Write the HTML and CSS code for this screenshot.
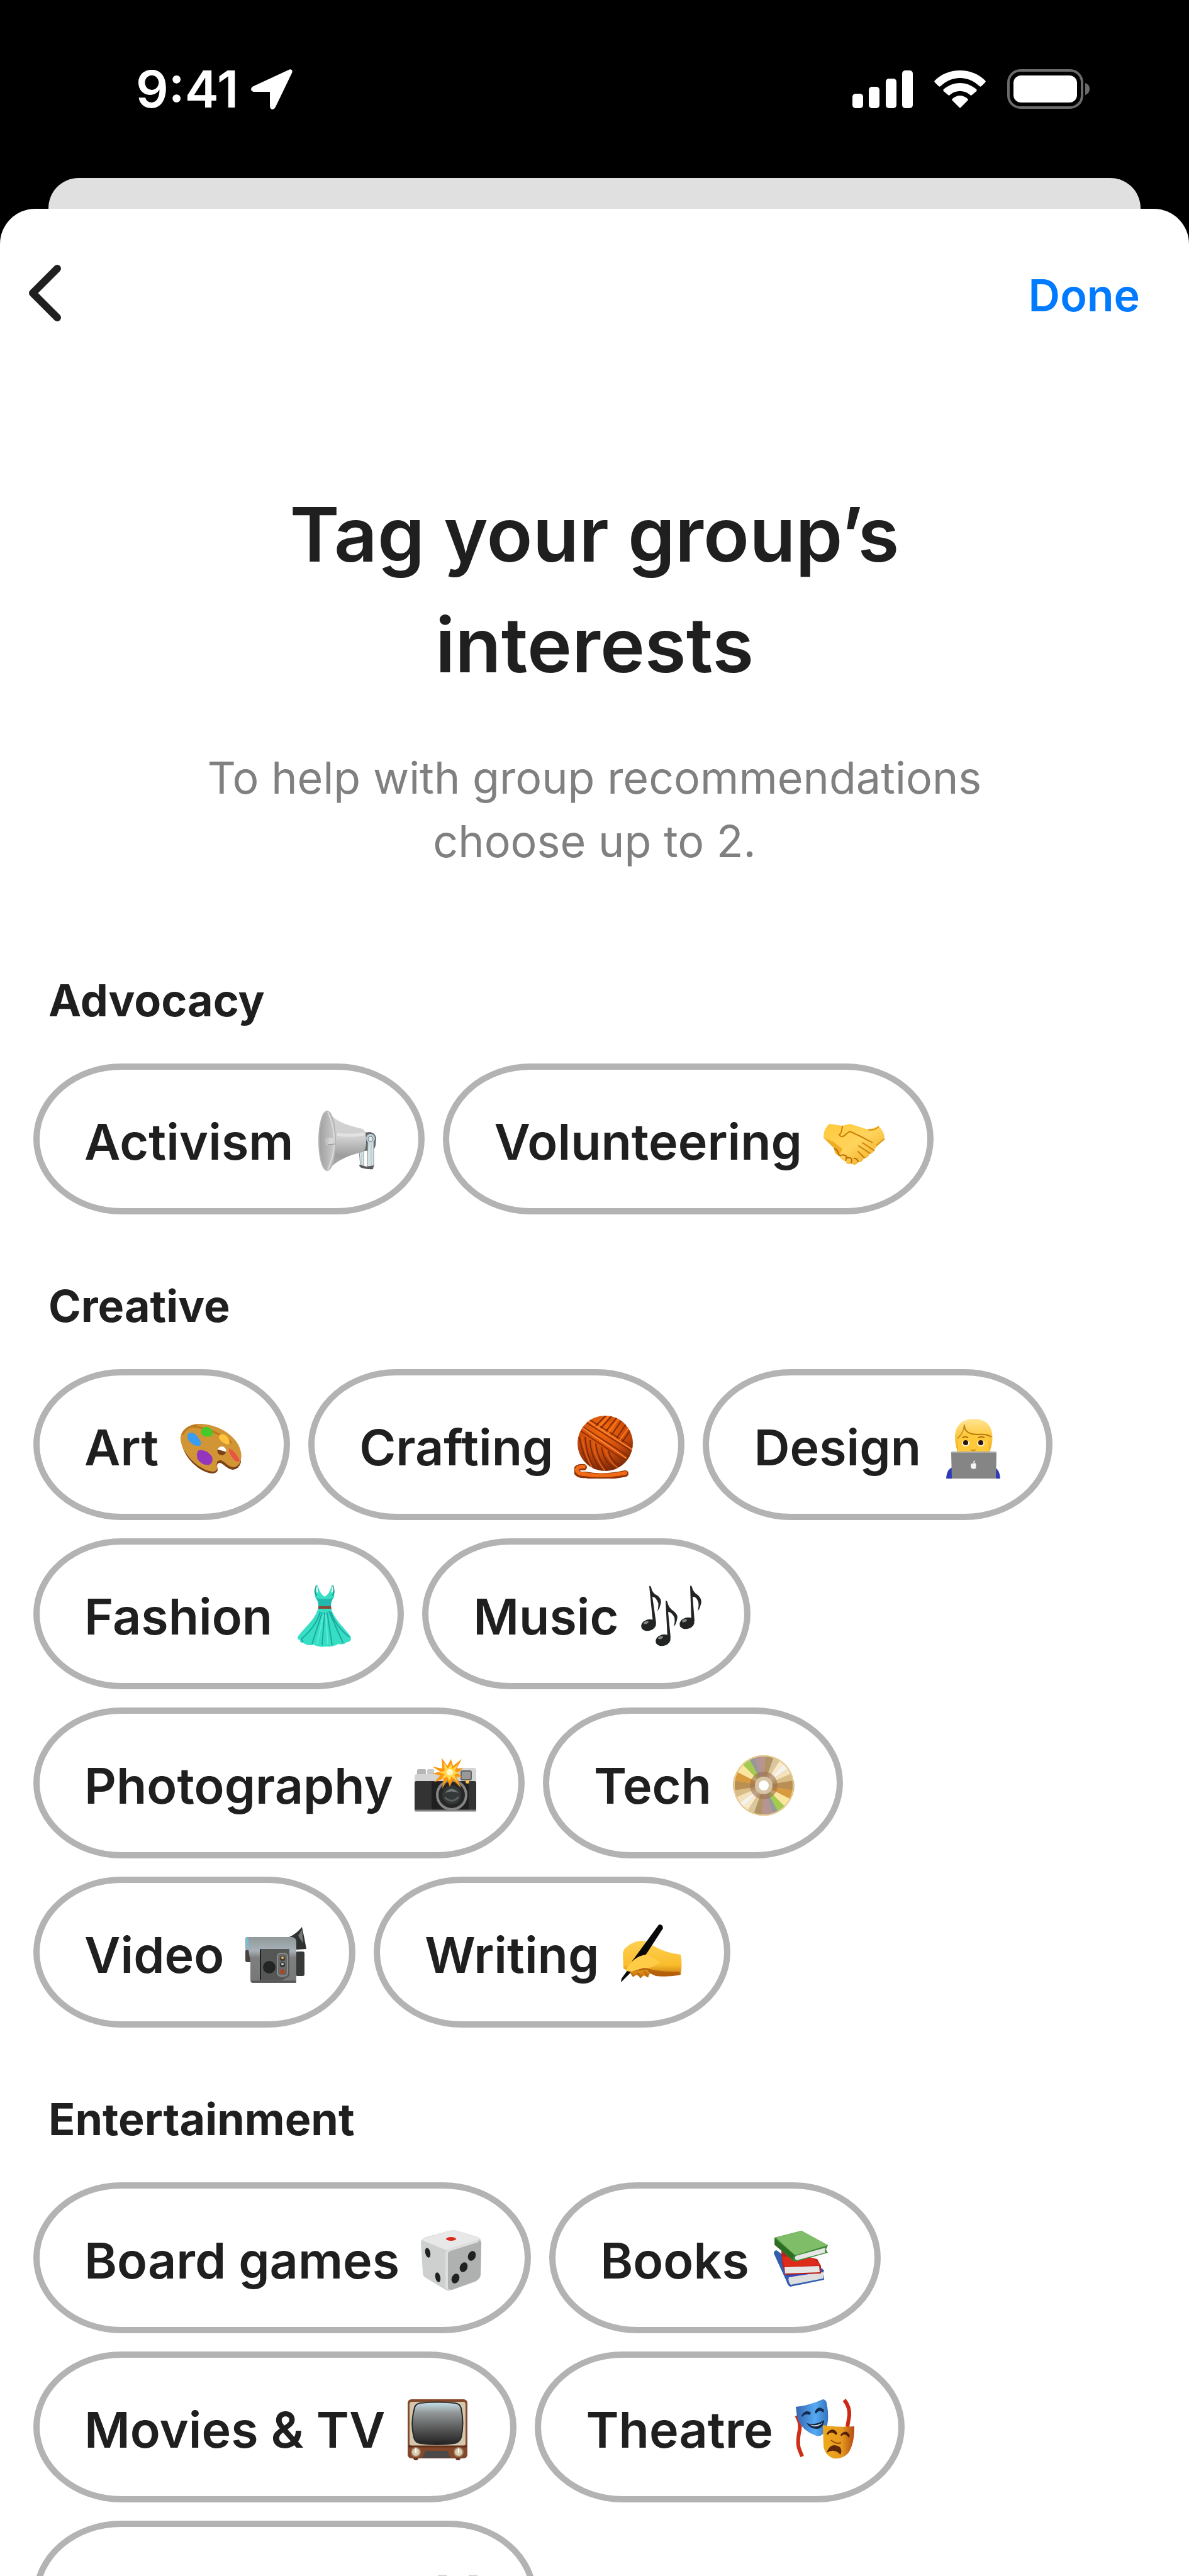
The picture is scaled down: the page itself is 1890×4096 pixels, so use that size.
FILE: index.html
```html
<!DOCTYPE html>
<html lang="en">
<head>
    <meta charset="UTF-8">
    <meta name="viewport" content="width=device-width, initial-scale=1.0">
    <title>Tag your group's interests</title>
    <link rel="stylesheet" href="styles.css">
</head>
<body>
    <div class="screen">
        <div class="status-bar">
            <div class="status-left">
                <span class="time">9:41</span>
                <svg class="location" viewBox="0 0 66 64" aria-hidden="true">
                    <path d="M60 1 L4 27 C-2 30 -1 36 6 36 L28 36 C30 36 30 36 30 38 L30 58 C30 65 36 66 39 60 L65 6 C67 2 64 -1 60 1 Z" fill="#fff"/>
                </svg>
            </div>
            <div class="status-right">
                <svg class="signal" viewBox="0 0 96 60" aria-hidden="true">
                    <g fill="#fff">
                        <rect x="0" y="37" width="17" height="23" rx="5"/>
                        <rect x="26" y="26" width="17" height="34" rx="5"/>
                        <rect x="53" y="13" width="17" height="47" rx="5"/>
                        <rect x="79" y="0" width="17" height="60" rx="5"/>
                    </g>
                </svg>
                <svg class="wifi" viewBox="0 0 82 60" aria-hidden="true">
                    <g fill="#fff">
                        <path d="M41 0 C57 0 71 6 81 16 C82 17 82 18 81 19 L75 25 C74 26 73 26 72 25 C63 17 53 12 41 12 C29 12 19 17 10 25 C9 26 8 26 7 25 L1 19 C0 18 0 17 1 16 C11 6 25 0 41 0 Z"/>
                        <path d="M41 20 C51 20 60 24 67 30 C68 31 68 32 67 33 L60 39 C59 40 58 40 57 39 C53 35 47 33 41 33 C35 33 29 35 25 39 C24 40 23 40 22 39 L15 33 C14 32 14 31 15 30 C22 24 31 20 41 20 Z"/>
                        <path d="M41 40 C45 40 50 42 53 45 C54 46 54 47 53 48 L42 59 C41 60 41 60 40 59 L29 48 C28 47 28 46 29 45 C32 42 37 40 41 40 Z"/>
                    </g>
                </svg>
                <svg class="battery" viewBox="0 0 131 63" aria-hidden="true">
                    <rect x="2" y="2" width="117" height="59" rx="19" fill="none" stroke="#6b6b6b" stroke-width="4"/>
                    <rect x="10" y="10" width="101" height="43" rx="12" fill="#fff"/>
                    <path d="M124 22 C129 24 131 27 131 31 C131 36 129 39 124 41 Z" fill="#6b6b6b"/>
                </svg>
            </div>
        </div>

        <div class="sheet-behind"></div>

        <main class="sheet">
            <nav class="nav">
                <button class="back" type="button" aria-label="Back">
                    <svg class="chevron" viewBox="0 0 54 92" aria-hidden="true">
                        <path d="M47 7 L8 46 L47 85" fill="none" stroke="#1f1f1f" stroke-width="12" stroke-linecap="round" stroke-linejoin="round"/>
                    </svg>
                </button>
                <button class="done" type="button">Done</button>
            </nav>

            <header class="intro">
                <h1>Tag your group’s<br>interests</h1>
                <p>To help with group recommendations<br>choose up to 2.</p>
            </header>

            <section class="group">
                <h2>Advocacy</h2>
                <div class="tags">
                    <button class="tag" type="button">Activism
                        <svg class="emoji" viewBox="0 0 100 100" aria-hidden="true">
                            <defs>
                                <linearGradient id="horn" x1="0" y1="0" x2="0" y2="1">
                                    <stop offset="0" stop-color="#d2d2d2"/><stop offset=".45" stop-color="#d0d0d0"/><stop offset=".75" stop-color="#9c9c9c"/><stop offset="1" stop-color="#b4b4b4"/>
                                </linearGradient>
                                <linearGradient id="bell" x1="0" y1="0" x2="1" y2="0">
                                    <stop offset="0" stop-color="#9f9f9f"/><stop offset="1" stop-color="#cdcdcd"/>
                                </linearGradient>
                            </defs>
                            <path d="M78 36 L88 35 Q96 36 98 44 L97 56 Q96 62 91 64 L79 65 Z" fill="#63696b"/>
                            <path d="M71 66 L78 64 L78 88 L73 88 Z" fill="#dfe6e7" stroke="#8b9192" stroke-width="1"/>
                            <path d="M85 44 L94 44 L94 90 L84 90 Z" fill="#d9e0e2" stroke="#8b9192" stroke-width="1"/>
                            <path d="M90 50 L90 88 M75 68 L75 87" stroke="#8ecad1" stroke-width="1"/>
                            <circle cx="89" cy="45" r="7" fill="#bcd3dc"/>
                            <circle cx="89" cy="46" r="4" fill="#dde6e8" stroke="#6d7678" stroke-width="1"/>
                            <path d="M71 87 L83 90 L94 88 L93 94 Q86 95 75 92 Q71 91 71 87 Z" fill="#595b5c"/>
                            <path d="M20 1 C32 19 55 25 76 30 Q82 32 82 49 Q82 65 76 67 C56 71 34 80 20 97 Z" fill="url(#horn)"/>
                            <path d="M38 39 Q58 42 78 38" fill="none" stroke="#e2e2e2" stroke-width="5" stroke-linecap="round"/>
                            <ellipse cx="20" cy="49" rx="13" ry="47" fill="url(#bell)" stroke="#b4b4b4" stroke-width="2"/>
                            <path d="M21 3 Q42 49 21 95" fill="none" stroke="#dcdcdc" stroke-width="2"/>
                            <path d="M20 44 L32 45 L32 54 L20 55 Q15 49 20 44 Z" fill="#d6d6d6"/>
                            <path d="M21 55 L32 54" stroke="#8d8d8d" stroke-width="1"/>
                            <ellipse cx="20" cy="49" rx="3" ry="5" fill="#c4c4c4"/>
                        </svg>
                    </button>
                    <button class="tag" type="button">Volunteering
                        <svg class="emoji" viewBox="0 0 100 100" aria-hidden="true">
                            <defs>
                                <linearGradient id="skin" x1="0" y1="0" x2="1" y2="1">
                                    <stop offset="0" stop-color="#ffc83a"/><stop offset=".5" stop-color="#ffd45c"/><stop offset="1" stop-color="#eda51b"/>
                                </linearGradient>
                            </defs>
                            <path d="M9 22 Q0 30 0 44 L17 61 Q17 70 25 73 Q28 80 35 81 Q36 88 44 85 Q51 90 55 83 Q61 84 64 77 Q71 77 73 70 Q81 68 82 61 L97 46 Q97 34 88 26 L71 31 L42 22 L30 25 Z" fill="url(#skin)"/>
                            <path d="M0 44 L17 61 Q17 70 25 73 L30 62 L15 50 Z" fill="#efae24"/>
                            <path d="M30 25 Q29 38 25 39 Q29 46 36 38 L42 34 Q60 42 78 52" fill="none" stroke="#c97f0c" stroke-width="2"/>
                            <path d="M71 31 Q80 34 88 26 M97 46 L84 56" fill="none" stroke="#d9920f" stroke-width="2"/>
                            <path d="M56 57 L74 69 M55 66 L65 76 M62 52 L80 64" fill="none" stroke="#c97f0c" stroke-width="2" stroke-linecap="round"/>
                            <path d="M17 61 Q23 63 25 73 M26 73 Q31 69 37 74 L35 81 M37 77 Q42 74 45 78 L44 85 M48 77 Q54 76 55 83" fill="none" stroke="#bd6c0a" stroke-width="2"/>
                        </svg>
                    </button>
                </div>
            </section>

            <section class="group">
                <h2>Creative</h2>
                <div class="tags">
                    <button class="tag" type="button">Art
                        <svg class="emoji" viewBox="0 0 100 100" aria-hidden="true">
                            <path d="M2 37 C3 66 32 91 52 92 Q60 91 60 86 Q57 74 64 75 C70 77 75 85 84 86 Q94 85 97 74 L96 64 Z" fill="#7d4216"/>
                            <path d="M28 13 C11 15 0 25 1 38 C3 61 32 88 53 89 Q60 88 59 81 Q57 70 65 71 C72 73 76 82 86 82 C96 80 99 69 97 58 C93 34 62 12 28 13 Z M67 49 a7 7 0 1 1 -1 14 a7 7 0 1 1 1 -14 Z" fill="#d29536" fill-rule="evenodd"/>
                            <path d="M27 15 Q10 17 4 30 M20 17 Q55 21 82 43" fill="none" stroke="#bb791e" stroke-width="3"/>
                            <path d="M39 18 Q48 16 52 26 Q54 33 47 33 Q39 35 34 29 Q32 22 39 18 Z" fill="#45cb29"/>
                            <path d="M16 27 Q24 26 29 35 Q37 45 31 48 Q20 49 13 38 Q10 29 16 27 Z" fill="#389cf0"/>
                            <path d="M66 29 Q77 30 79 43 Q78 48 71 44 Q61 39 62 32 Z" fill="#ffc23c"/>
                            <path d="M78 52 Q88 56 95 71 Q93 76 86 70 Q77 60 78 52 Z" fill="#e95442"/>
                            <path d="M30 55 Q42 53 51 65 Q54 74 47 78 Q35 80 28 69 Q25 59 30 55 Z" fill="#9436bd"/>
                        </svg>
                    </button>
                    <button class="tag" type="button">Crafting
                        <svg class="emoji" viewBox="0 0 100 100" aria-hidden="true">
                            <defs>
                                <radialGradient id="yarn" cx=".45" cy=".25" r=".75">
                                    <stop offset="0" stop-color="#f56c0c"/><stop offset=".6" stop-color="#cb4a0b"/><stop offset="1" stop-color="#7b2908"/>
                                </radialGradient>
                                <clipPath id="ball"><ellipse cx="49" cy="44" rx="44" ry="44"/></clipPath>
                            </defs>
                            <path d="M15 82 C-2 80 0 96 17 94 Q45 100 81 92" fill="none" stroke="#8e3207" stroke-width="10" stroke-linecap="round"/>
                            <path d="M15 81 C-1 80 1 94 17 93 Q45 98 81 91" fill="none" stroke="#f06b17" stroke-width="6" stroke-linecap="round" stroke-dasharray="6 3"/>
                            <ellipse cx="49" cy="44" rx="44" ry="44" fill="url(#yarn)"/>
                            <g clip-path="url(#ball)" fill="none" stroke-width="2">
                                <path d="M7 22 L81 72 M9 15 L87 65 M16 9 L92 57 M22 5 L94 50" stroke="#8a2f07"/>
                                <path d="M11 18 L83 68 M19 7 L92 54" stroke="#ff8431"/>
                                <path d="M34 16 L50 0 M42 20 L60 0 M50 25 L68 2 M59 31 L76 6 M67 36 L83 12 M76 42 L90 22" stroke="#7e2a06"/>
                                <path d="M38 18 L55 0 M54 27 L72 3 M72 39 L87 18" stroke="#ff7a1d"/>
                                <path d="M8 34 Q14 66 25 82 M17 34 Q20 68 34 88 M25 39 Q26 67 44 88 M34 44 Q36 68 54 88 M43 50 Q47 73 64 86 M54 56 Q58 72 73 80" stroke="#7e2a06"/>
                                <path d="M12 34 Q17 64 29 84 M30 42 Q32 68 49 88 M49 54 Q54 73 69 83" stroke="#e06018"/>
                            </g>
                        </svg>
                    </button>
                    <button class="tag" type="button">Design
                        <svg class="emoji" viewBox="0 0 100 100" aria-hidden="true">
                            <defs>
                                <linearGradient id="hair" x1="0" y1="0" x2="0" y2="1">
                                    <stop offset="0" stop-color="#ffe596"/><stop offset=".4" stop-color="#ffd052"/><stop offset="1" stop-color="#f2ac18"/>
                                </linearGradient>
                            </defs>
                            <path d="M6 100 Q7 84 17 82 L82 82 Q91 85 92 100 Z" fill="#2e3bb9"/>
                            <path d="M24 57 Q18 38 21 25 Q27 5 50 5 Q75 5 79 28 Q81 43 75 57 Z" fill="url(#hair)"/>
                            <path d="M25 37 Q30 31 38 27 Q58 35 72 31 L74 57 L25 57 Z" fill="#ffc93a"/>
                            <path d="M35 14 Q34 30 57 30 Q71 29 78 34" fill="none" stroke="#b87610" stroke-width="2"/>
                            <path d="M35 14 Q34 28 24 36" fill="none" stroke="#cf9120" stroke-width="2"/>
                            <path d="M32 35 Q36 32 41 35 M57 35 Q62 32 67 35" fill="none" stroke="#a26816" stroke-width="2"/>
                            <ellipse cx="37" cy="44" rx="6" ry="5" fill="#fff3d8"/>
                            <ellipse cx="61" cy="44" rx="6" ry="5" fill="#fff3d8"/>
                            <circle cx="37" cy="43" r="4" fill="#2a1609"/>
                            <circle cx="61" cy="43" r="4" fill="#2a1609"/>
                            <path d="M45 54 Q49 57 53 54" fill="none" stroke="#ce8d18" stroke-width="2"/>
                            <path d="M16 57 L83 57 Q86 57 86 60 L85 100 L15 100 L14 60 Q14 57 16 57 Z" fill="#858585"/>
                            <path d="M15 58 L85 58" stroke="#a9a9a9" stroke-width="2"/>
                            <path d="M49 76 Q52 74 54 77 Q52 79 54 82 Q51 87 49 84 Q45 86 45 79 Q46 75 49 76 Z M49 75 Q49 72 52 71 Q52 75 49 75 Z" fill="#f5f5f5"/>
                        </svg>
                    </button>
                    <button class="tag" type="button">Fashion
                        <svg class="emoji" viewBox="0 0 100 100" aria-hidden="true">
                            <path d="M36 1 Q33 12 34 20 Q40 26 39 36 C35 55 18 66 6 83 Q6 88 10 87 Q9 93 15 92 Q22 98 31 95 Q40 100 51 98 Q63 99 71 94 Q80 96 84 91 Q91 92 91 83 C79 66 63 54 59 36 Q58 26 64 20 Q65 12 62 1 L60 1 Q57 15 49 19 Q42 15 38 1 Z" fill="#36dec4"/>
                            <path d="M36 1 Q31 14 37 17 M62 1 Q66 14 61 17" fill="none" stroke="#1b9d91" stroke-width="2"/>
                            <path d="M37 3 Q36 9 38 12 M61 3 Q63 9 60 12" fill="none" stroke="#fff" stroke-width="2"/>
                            <path d="M35 20 Q40 28 39 34 L59 34 Q59 27 63 20 Q57 24 49 22 Q42 24 35 20 Z" fill="#20b8ac"/>
                            <path d="M39 34 L59 34 L60 38 L39 38 Z" fill="#8d4934"/>
                            <path d="M42 43 Q35 67 12 86 L15 91 M45 44 L29 94 M49 44 L45 96 M53 44 L61 96 M56 42 L78 92 M59 43 Q65 64 88 83" fill="none" stroke="#1da99f" stroke-width="2"/>
                            <path d="M47 48 L37 94 M51 48 L54 94" stroke="#57eed6" stroke-width="2"/>
                        </svg>
                    </button>
                    <button class="tag" type="button">Music
                        <svg class="emoji" viewBox="0 0 100 100" aria-hidden="true">
                            <g fill="#222424">
                                <ellipse cx="13" cy="64" rx="12" ry="9" transform="rotate(-18 13 64)"/>
                                <path d="M14 2 Q16 1 17 4 Q19 14 27 17 Q35 23 32 31 Q31 37 27 42 Q30 30 27 26 Q24 19 19 19 L25 61 L20 61 Z"/>
                                <ellipse cx="36" cy="88" rx="12" ry="9" transform="rotate(-18 36 88)"/>
                                <path d="M40 26 Q42 24 43 28 Q45 37 53 42 Q61 48 58 56 Q57 62 53 67 Q56 55 53 50 Q49 43 44 43 L48 84 L43 84 Z"/>
                                <ellipse cx="74" cy="61" rx="12" ry="9" transform="rotate(-18 74 61)"/>
                                <path d="M79 2 Q81 0 82 4 Q84 12 91 16 Q99 23 96 31 Q95 37 91 42 Q94 30 91 25 Q88 18 83 19 L86 58 L81 58 Z"/>
                            </g>
                            <g fill="#868989">
                                <ellipse cx="9" cy="60" rx="4" ry="2" transform="rotate(-20 9 60)"/>
                                <ellipse cx="32" cy="84" rx="4" ry="2" transform="rotate(-20 32 84)"/>
                                <ellipse cx="70" cy="57" rx="4" ry="2" transform="rotate(-20 70 57)"/>
                            </g>
                        </svg>
                    </button>
                    <button class="tag" type="button">Photography
                        <svg class="emoji" viewBox="0 0 100 100" aria-hidden="true">
                            <rect x="4" y="24" width="14" height="14" rx="2" fill="#b6b6b6"/>
                            <rect x="20" y="24" width="11" height="14" rx="2" fill="#c9c9c9"/>
                            <path d="M40 28 L46 22 L94 22 Q98 22 98 27 L98 46 L0 46 L0 35 Q0 32 4 32 L38 32 Z" fill="#d4d4d4"/>
                            <rect x="0" y="43" width="98" height="48" rx="3" fill="#333"/>
                            <rect x="27" y="44" width="59" height="46" fill="#202020"/>
                            <path d="M1 90 L98 90" stroke="#828282" stroke-width="3"/>
                            <rect x="74" y="27" width="16" height="14" rx="2" fill="#999" stroke="#646464" stroke-width="2"/>
                            <circle cx="59" cy="65" r="23" fill="#272727" stroke="#858585" stroke-width="4"/>
                            <circle cx="59" cy="65" r="15" fill="#343838"/>
                            <path d="M48 62 Q59 49 70 62 Q59 57 48 62 Z" fill="#747b7b"/>
                            <path d="M48 69 Q60 80 70 68" fill="none" stroke="#5b6060" stroke-width="3"/>
                            <path d="M43 6 L52 19 L58 8 L61 19 L75 8 L67 23 L77 23 L68 30 L76 37 L66 36 L74 54 L61 41 L56 52 L52 41 L44 55 L46 39 L31 45 L41 34 L28 31 L41 28 L28 20 L44 23 Z" fill="#fb960d"/>
                            <path d="M46 13 L53 23 L58 15 L60 24 L69 16 L64 27 L70 30 L63 33 L68 44 L59 36 L55 43 L52 36 L43 40 L48 32 L38 29 L48 27 Z" fill="#ffd750"/>
                            <circle cx="56" cy="29" r="5" fill="#fff9cb"/>
                            <circle cx="84" cy="44" r="3" fill="#ffc44c"/>
                        </svg>
                    </button>
                    <button class="tag" type="button">Tech
                        <svg class="emoji" viewBox="0 0 100 100" aria-hidden="true">
                            <circle cx="49" cy="50" r="48" fill="#d8bd87"/>
                            <g id="disc-half">
                                <path d="M49 50 L1 42 A48 48 0 0 0 1 58 Z" fill="#b98f54"/>
                                <path d="M49 50 L1 42 A48 48 0 0 1 6 28 Z" fill="#d99a3d"/>
                                <path d="M49 50 L6 28 A48 48 0 0 1 15 16 Z" fill="#fbe6a0"/>
                                <path d="M49 50 L15 16 A48 48 0 0 1 26 8 Z" fill="#a2cb4f"/>
                                <path d="M49 50 L26 8 A48 48 0 0 1 35 4 Z" fill="#989899"/>
                                <path d="M49 50 L35 4 A48 48 0 0 1 51 2 Z" fill="#b79494"/>
                                <path d="M49 50 L51 2 A48 48 0 0 1 65 5 Z" fill="#b19465"/>
                                <path d="M49 50 L65 5 A48 48 0 0 1 75 10 Z" fill="#dac69d"/>
                                <path d="M49 50 L75 10 A48 48 0 0 1 82 15 Z" fill="#fbeac9"/>
                                <path d="M49 50 L82 15 A48 48 0 0 1 88 22 Z" fill="#f4f3f0"/>
                                <path d="M49 50 L88 22 A48 48 0 0 1 93 31 Z" fill="#f3e2bd"/>
                            </g>
                            <use href="#disc-half" transform="rotate(180 49 50)"/>
                            <circle cx="49" cy="50" r="47" fill="none" stroke="#e6cb93" stroke-width="2"/>
                            <circle cx="49" cy="50" r="18" fill="none" stroke="#9b704f" stroke-width="8" opacity=".6"/>
                            <circle cx="49" cy="50" r="11" fill="#fff" stroke="#d6c4a4" stroke-width="6"/>
                        </svg>
                    </button>
                    <button class="tag" type="button">Video
                        <svg class="emoji" viewBox="0 0 100 100" aria-hidden="true">
                            <defs>
                                <linearGradient id="cam" x1="0" y1="0" x2="0" y2="1">
                                    <stop offset="0" stop-color="#919999"/><stop offset=".3" stop-color="#a7b1b8"/><stop offset=".45" stop-color="#7f7f7f"/><stop offset="1" stop-color="#777"/>
                                </linearGradient>
                            </defs>
                            <rect x="80" y="45" width="14" height="39" rx="3" fill="#373838"/>
                            <path d="M56 26 Q76 23 90 6 Q94 24 97 41 L81 42 L79 29 Z" fill="#303232"/>
                            <path d="M84 20 L90 10 L92 32 Z" fill="#757979"/>
                            <rect x="0" y="42" width="12" height="20" rx="3" fill="#49413e"/>
                            <path d="M3 22 L74 22 Q81 23 81 30 L81 95 L12 95 Q8 95 8 91 L8 61 L5 43 L0 42 L0 25 Q0 22 3 22 Z" fill="url(#cam)"/>
                            <path d="M1 23 L5 23 L5 39 L1 39 Z" fill="#77bfd3"/>
                            <path d="M23 41 L70 41 L70 84 L58 91 L23 91 Z" fill="#555656"/>
                            <path d="M24 42 L24 90" stroke="#222" stroke-width="2"/>
                            <rect x="51" y="48" width="16" height="36" rx="5" fill="#676868" stroke="#8b8c8c" stroke-width="2"/>
                            <circle cx="38" cy="70" r="10" fill="#232424"/>
                            <circle cx="59" cy="56" r="4" fill="#403b34"/><circle cx="59" cy="55" r="2" fill="#f2bd63"/>
                            <circle cx="59" cy="66" r="4" fill="#303030"/><circle cx="59" cy="65" r="2" fill="#ccc"/>
                            <circle cx="59" cy="77" r="4" fill="#a6482d"/>
                            <path d="M10 93 L80 93" stroke="#555" stroke-width="3"/>
                        </svg>
                    </button>
                    <button class="tag" type="button">Writing
                        <svg class="emoji" viewBox="0 0 100 100" aria-hidden="true">
                            <defs>
                                <linearGradient id="hand" x1="0" y1="0" x2="0" y2="1">
                                    <stop offset="0" stop-color="#ffd052"/><stop offset=".65" stop-color="#f9bd2c"/><stop offset="1" stop-color="#bd660a"/>
                                </linearGradient>
                            </defs>
                            <path d="M5 72 L4 48 Q5 41 10 38 Q21 28 35 28 Q43 27 49 34 Q70 47 96 50 Q99 65 96 82 Q78 85 58 84 L47 80 L44 86 L37 83 L33 87 L26 82 L21 85 L13 76 Z" fill="url(#hand)"/>
                            <path d="M20 77 L39 70 Q56 78 94 77 L95 82 Q78 86 56 84 L47 79 L42 74 Z" fill="#a95408" opacity=".75"/>
                            <path d="M21 85 L17 79 M32 87 Q31 80 26 79 M44 86 Q42 79 37 76" fill="none" stroke="#b96709" stroke-width="2"/>
                            <path d="M60 4 Q62 0 67 4 L68 8 L42 48 Q34 58 22 65 L15 80 L1 94 L2 88 L10 77 L19 60 Z" fill="#080808"/>
                            <path d="M9 76 Q10 68 22 58 Q32 50 43 50 L64 62 Q50 73 37 71 Q26 74 17 77 Z" fill="#ffcc47"/>
                        </svg>
                    </button>
                </div>
            </section>

            <section class="group">
                <h2>Entertainment</h2>
                <div class="tags">
                    <button class="tag" type="button">Board games
                        <svg class="emoji" viewBox="0 0 100 100" aria-hidden="true">
                            <path d="M52 2 Q56 2 90 13 Q97 16 96 24 L95 73 Q95 79 87 84 L50 97 Q42 100 36 95 L8 78 Q3 75 3 70 L0 23 Q0 17 6 14 L45 3 Z" fill="#cecfcf"/>
                            <path d="M3 16 L45 3 Q52 1 59 3 L91 14 Q96 17 88 20 L48 33 Q42 35 36 32 L4 19 Z" fill="#e8e8e8"/>
                            <path d="M42 38 Q44 34 52 31 L91 19 Q97 18 96 27 L95 73 Q94 79 87 83 L49 97 L41 95 Z" fill="#aeb1b0"/>
                            <path d="M41 96 L41 43 Q40 35 47 33 L91 19" fill="none" stroke="#dedede" stroke-width="4"/>
                            <ellipse cx="48" cy="16" rx="8" ry="3" fill="#dc2b1b"/>
                            <g fill="#202121">
                                <ellipse cx="11" cy="38" rx="4" ry="8" transform="rotate(-12 11 38)"/>
                                <ellipse cx="27" cy="77" rx="4" ry="8" transform="rotate(-12 27 77)"/>
                                <ellipse cx="81" cy="43" rx="6" ry="8" transform="rotate(22 81 43)"/>
                                <ellipse cx="68" cy="61" rx="6" ry="8" transform="rotate(22 68 61)"/>
                                <ellipse cx="55" cy="79" rx="6" ry="8" transform="rotate(22 55 79)"/>
                            </g>
                        </svg>
                    </button>
                    <button class="tag" type="button">Books
                        <svg class="emoji" viewBox="0 0 100 100" aria-hidden="true">
                            <path d="M5 39 Q5 35 9 34 L22 43 L79 61 L85 66 L83 71 L85 81 L31 92 Q27 90 25 83 Z" fill="#315eae"/>
                            <path d="M29 76 L83 69 L83 79 L32 89 Q27 84 29 76 Z" fill="#dedede"/>
                            <path d="M25 73 L76 64 L84 68 L29 77 Z" fill="#3545bf"/>
                            <path d="M17 35 L74 48 L80 59 L80 71 L23 73 L18 53 Z" fill="#bd2118"/>
                            <path d="M22 61 L77 59 L78 69 L23 71 Z" fill="#e6e6e6"/>
                            <path d="M18 44 L67 46 L80 58 L22 60 Z" fill="#df2b1c"/>
                            <path d="M6 14 L49 3 L91 26 L88 33 L91 38 L40 52 Q34 51 31 47 L6 25 Z" fill="#3e8732"/>
                            <path d="M40 43 L87 30 L86 38 L41 50 Q37 47 40 43 Z" fill="#e6e6e6"/>
                            <path d="M8 14 L49 3 L91 26 L39 42 Z" fill="#7fbd68"/>
                            <path d="M7 16 L38 42 Q34 46 36 50 L7 26 Z" fill="#2d6c23"/>
                        </svg>
                    </button>
                    <button class="tag" type="button">Movies &amp; TV
                        <svg class="emoji" viewBox="0 0 100 100" aria-hidden="true">
                            <defs>
                                <linearGradient id="tube" x1="0" y1="0" x2="0" y2="1">
                                    <stop offset="0" stop-color="#c8e1eb"/><stop offset=".25" stop-color="#929797"/><stop offset=".65" stop-color="#555"/><stop offset="1" stop-color="#222"/>
                                </linearGradient>
                            </defs>
                            <circle cx="15" cy="95" r="4" fill="#5c2f20"/>
                            <circle cx="82" cy="95" r="4" fill="#5c2f20"/>
                            <rect x="2" y="2" width="95" height="94" rx="6" fill="#854729"/>
                            <rect x="5" y="6" width="89" height="70" rx="4" fill="#d3c6ad"/>
                            <path d="M13 15 Q15 9 22 8 Q49 5 77 8 Q85 9 87 16 Q92 40 87 63 Q84 71 76 72 Q49 76 22 72 Q14 71 12 63 Q6 40 13 15 Z" fill="url(#tube)" stroke="#292b2b" stroke-width="2"/>
                            <path d="M3 77 L96 77" stroke="#643018" stroke-width="3"/>
                            <path d="M30 84 L65 84 L70 95 L25 95 Z" fill="#4b4848"/>
                            <circle cx="15" cy="86" r="7" fill="#dccdb1" stroke="#9b8465" stroke-width="2"/>
                            <circle cx="83" cy="86" r="7" fill="#dccdb1" stroke="#9b8465" stroke-width="2"/>
                            <path d="M15 80 L15 87 M83 80 L83 87" stroke="#fff" stroke-width="2"/>
                        </svg>
                    </button>
                    <button class="tag" type="button">Theatre
                        <svg class="emoji" viewBox="0 0 100 100" aria-hidden="true">
                            <defs>
                                <linearGradient id="comedy"><stop offset="0" stop-color="#3564ae"/><stop offset=".6" stop-color="#55aaf4"/><stop offset="1" stop-color="#3773bd"/></linearGradient>
                                <linearGradient id="tragedy"><stop offset="0" stop-color="#efa91c"/><stop offset=".6" stop-color="#e59a1e"/><stop offset="1" stop-color="#b44912"/></linearGradient>
                            </defs>
                            <path d="M3 28 Q10 38 8 51 Q4 70 7 80 L12 93" fill="none" stroke="#cf2d17" stroke-width="6"/>
                            <path d="M79 3 Q88 14 87 28 L84 46" fill="none" stroke="#cc2815" stroke-width="6"/>
                            <path d="M2 14 Q23 12 45 2 Q51 2 52 13 Q56 39 48 53 Q42 64 32 59 Q10 51 4 30 Z" fill="url(#comedy)"/>
                            <path d="M45 43 Q67 47 95 45 C95 62 93 77 85 88 Q75 98 62 96 Q49 92 46 77 Z" fill="url(#tragedy)"/>
                            <path d="M11 28 Q17 17 26 23 L24 27 Q17 24 12 30 Z M32 22 Q38 10 47 19 L46 23 Q39 17 34 25 Z" fill="#152c51"/>
                            <path d="M19 40 Q34 44 47 35 Q46 49 35 49 Q25 49 19 40 Z" fill="#142944"/>
                            <path d="M23 42 Q34 46 45 39 Q39 46 30 45 Z" fill="#e5f3ff"/>
                            <path d="M51 56 Q61 44 68 56 L66 59 Q59 51 52 59 Z M73 58 Q83 48 88 60 L86 63 Q80 54 74 61 Z" fill="#532106"/>
                            <path d="M51 87 Q57 69 72 78 Q76 83 73 90 Q63 79 51 87 Z" fill="#5e2506"/>
                            <path d="M58 67 Q66 74 74 71" fill="none" stroke="#9c4d0a" stroke-width="2"/>
                        </svg>
                    </button>
                    <button class="tag tag-long" type="button" aria-label="More interests">
                        <svg class="emoji" viewBox="0 0 100 100" aria-hidden="true">
                            <path d="M18 12 h14 v14 h-14 Z M67 12 h14 v14 h-14 Z M25 26 h50 v60 h-50 Z" fill="#d6d6d6"/>
                        </svg>
                    </button>
                </div>
            </section>
        </main>
    </div>
</body>
</html>
```
FILE: styles.css
```css
* {
    box-sizing: border-box;
}
body {
    margin: 0;
    background: #000;
    color: #1f1f1f;
    font-family: Inter, "Liberation Sans", sans-serif;
}
button {
    margin: 0;
    padding: 0;
    border: none;
    background: none;
    color: inherit;
    font-family: inherit;
    cursor: pointer;
}
svg {
    display: block;
    flex: none;
}
.screen {
    display: flex;
    flex-direction: column;
    height: 100vh;
    overflow: hidden;
}

/* status bar */
.status-bar {
    display: flex;
    flex: none;
    align-items: center;
    justify-content: space-between;
    height: 283px;
    padding: 0 158px 0 216px;
    color: #fff;
}
.status-left {
    display: flex;
    align-items: center;
    gap: 20px;
}
.time {
    font-size: 81px;
    font-weight: 600;
    line-height: 96px;
}
.location {
    width: 66px;
    height: 64px;
}
.status-right {
    display: flex;
    align-items: center;
    gap: 34px;
}
.signal {
    width: 96px;
    height: 60px;
}
.wifi {
    width: 82px;
    height: 60px;
}
.battery {
    width: 131px;
    height: 63px;
}

/* sheets */
.sheet-behind {
    flex: none;
    height: 49px;
    margin: 0 77px;
    background: #e0e0e0;
    border-radius: 48px 48px 0 0;
}
.sheet {
    flex: 1;
    min-height: 0;
    overflow: hidden;
    background: #fff;
    border-radius: 56px 56px 0 0;
}
.nav {
    display: flex;
    align-items: center;
    justify-content: space-between;
    height: 268px;
    padding: 0 78px 0 44px;
}
.chevron {
    width: 54px;
    height: 92px;
}
.done {
    padding-top: 8px;
    color: #007aff;
    font-size: 70px;
    font-weight: 600;
    line-height: 84px;
}

.intro {
    padding: 162px 77px 0;
    text-align: center;
}
.intro h1 {
    margin: 0 0 72px;
    font-size: 120px;
    font-weight: 600;
    line-height: 176px;
}
.intro p {
    margin: 0 0 161px;
    color: #808080;
    font-size: 70px;
    line-height: 101px;
}

/* tag groups */
.group {
    padding: 0 53px;
    margin-bottom: 104px;
}
.group h2 {
    margin: 0 24px 58px;
    font-size: 70px;
    font-weight: 700;
    line-height: 84px;
}
.tags {
    display: flex;
    flex-wrap: wrap;
    gap: 29px;
}
.tag {
    display: flex;
    align-items: center;
    gap: 34px;
    height: 240px;
    padding: 8px 65px 0 71px;
    border: 10px solid #b3b3b3;
    border-radius: 140px / 120px;
    font-size: 79px;
    font-weight: 600;
    white-space: nowrap;
}
.tag-long {
    justify-content: flex-end;
    min-width: 800px;
}
.emoji {
    width: 100px;
    height: 100px;
}
```
